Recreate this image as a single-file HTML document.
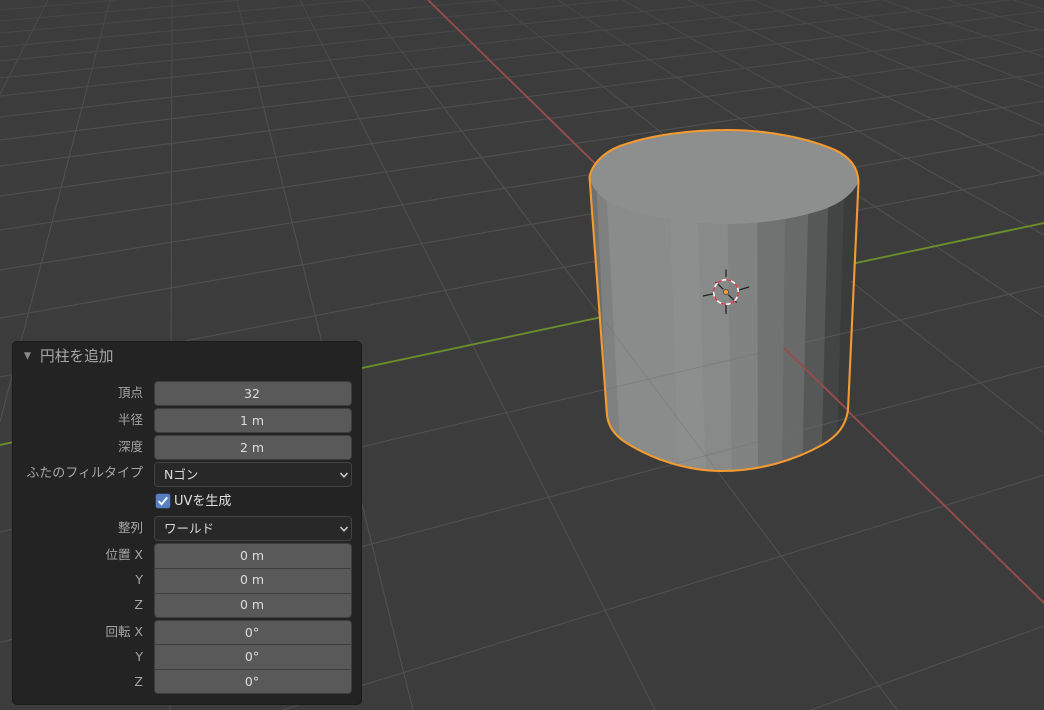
<!DOCTYPE html>
<html lang="ja">
<head>
<meta charset="utf-8">
<title>円柱を追加</title>
<style>
html,body{margin:0;padding:0;width:1044px;height:710px;overflow:hidden;background:#3c3c3c}
body{position:relative;font-family:"DejaVu Sans","Noto Sans CJK JP",sans-serif;font-size:12.5px;filter:blur(0.3px)}
svg.scene{position:absolute;left:0;top:0;display:block}
.panel{position:absolute;left:12px;top:341px;width:348px;height:362px;background:#232323;border:1px solid #1b1b1b;border-radius:5px}
.t,.l,.f{position:absolute;white-space:nowrap}
.t{left:40px;top:347px;font-size:14.7px;line-height:20px;color:#a6a6a6}
.l{left:12px;width:131px;text-align:right;color:#a6a6a6;line-height:24px;height:24px}
.f{left:154px;width:194px;padding-right:2px;background:#595959;border:1px solid #3e3e3e;color:#dcdcdc;text-align:center;line-height:23px;height:23px;border-radius:4px}
.top{border-radius:4px 4px 0 0;border-bottom:0;height:24px}
.mid{border-radius:0;border-bottom:0;height:24px;line-height:21.5px}
.bot{border-radius:0 0 4px 4px;line-height:21.5px}
.d{background:#282828;text-align:left;text-indent:9px;border-color:#434343;color:#d8d8d8}
.ck{position:absolute;left:155px;top:493px;width:14px;height:14px;background:#5680c2;border:1px solid #2f3850;border-radius:3px}
.uv{position:absolute;left:174px;top:489.5px;font-size:13px;line-height:23px;color:#e0e0e0}
svg.i{position:absolute}
</style>
</head>
<body>
<svg class="scene" width="1044" height="710" viewBox="0 0 1044 710" xmlns="http://www.w3.org/2000/svg">
<defs>
<g id="grid" fill="none" stroke-width="1.1">
<line x1="0" y1="10" x2="118.6" y2="0"/>
<line x1="0" y1="21" x2="240.9" y2="0"/>
<line x1="0" y1="33" x2="362.6" y2="0"/>
<line x1="0" y1="47" x2="495.6" y2="0"/>
<line x1="0" y1="61" x2="618.3" y2="0"/>
<line x1="0" y1="78" x2="754" y2="0"/>
<line x1="0" y1="96" x2="879" y2="0"/>
<line x1="0" y1="117" x2="1009.5" y2="0"/>
<line x1="0" y1="140" x2="1044" y2="11"/>
<line x1="0" y1="166" x2="1044" y2="29"/>
<line x1="0" y1="196" x2="1044" y2="49"/>
<line x1="0" y1="230" x2="1044" y2="73"/>
<line x1="0" y1="270" x2="1044" y2="101"/>
<line x1="0" y1="318" x2="1044" y2="134"/>
<line x1="0" y1="377" x2="1044" y2="174"/>
<line x1="0" y1="532" x2="1044" y2="286"/>
<line x1="0" y1="642.5" x2="1044" y2="366"/>
<line x1="282" y1="710" x2="1044" y2="475"/>
<line x1="811" y1="710" x2="1044" y2="626"/>
<line x1="48" y1="0" x2="0" y2="94.4"/>
<line x1="110" y1="0" x2="0" y2="422"/>
<line x1="172" y1="0" x2="170" y2="710"/>
<line x1="237" y1="0" x2="413" y2="710"/>
<line x1="300" y1="0" x2="655" y2="710"/>
<line x1="363" y1="0" x2="897" y2="710"/>
<line x1="493" y1="0" x2="1044" y2="433"/>
<line x1="558" y1="0" x2="1044" y2="317"/>
<line x1="623" y1="0" x2="1044" y2="235"/>
<line x1="688" y1="0" x2="1044" y2="173.5"/>
<line x1="753" y1="0" x2="1044" y2="125.8"/>
<line x1="818" y1="0" x2="1044" y2="87.9"/>
<line x1="883" y1="0" x2="1044" y2="56.8"/>
<line x1="948" y1="0" x2="1044" y2="31"/>
<line x1="1013" y1="0" x2="1044" y2="9.2"/>
</g>
<linearGradient id="fade" x1="0" y1="0" x2="0" y2="1">
<stop offset="0" stop-color="#3c3c3c" stop-opacity="0.5"/>
<stop offset="1" stop-color="#3c3c3c" stop-opacity="0"/>
</linearGradient>
<clipPath id="body"><path d="M589.5,177 L607,415 C608,425 613,434 625,442 C650,458 685,471 722,471 C760,471 795,460 822,445 C838,436 846,425 848,410 L858.5,182 C858,168 850,157 835,150 C810,139 770,130 727,130 C690,130 650,135 620,146 C602,153 592,165 589.5,177 Z"/></clipPath>
<clipPath id="front"><path d="M600,318 C640,350 730,362 784,348 C820,338 850,300 855,265 L848,410 C846,425 838,436 822,445 C795,460 760,471 722,471 C685,471 650,458 625,442 C613,434 608,425 607,415 Z"/></clipPath>
</defs>
<rect width="1044" height="710" fill="#3c3c3c"/>
<use href="#grid" stroke="#505050"/>
<rect width="1044" height="130" fill="url(#fade)"/>
<line x1="0" y1="445" x2="1044" y2="223" stroke="#6a8f2c" stroke-width="1.9"/>
<line x1="428" y1="0" x2="1044" y2="603" stroke="#964c4a" stroke-width="1.9"/>
<g clip-path="url(#body)">
<polygon points="580,130 870,130 870,480 580,480" fill="#6f7171"/>
<polygon points="594,130 870,130 870,480 610,480" fill="#7f8181"/>
<polygon points="603,130 870,130 870,480 622,480" fill="#8a8c8c"/>
<polygon points="667,130 870,130 870,480 679,480" fill="#8d8f8e"/>
<polygon points="695,130 870,130 870,480 706,480" fill="#888a89"/>
<polygon points="726,130 870,130 870,480 732,480" fill="#818382"/>
<polygon points="757,130 870,130 870,480 758,480" fill="#717372"/>
<polygon points="786,130 870,130 870,480 782,480" fill="#686969"/>
<polygon points="810,130 870,130 870,480 802,480" fill="#565757"/>
<polygon points="830,130 870,130 870,480 821,480" fill="#434444"/>
<polygon points="846,130 870,130 870,480 836,480" fill="#3a3b3b"/>
</g>
<path d="M589.5,177 C592,165 602,153 620,146 C650,135 690,130 727,130 C770,130 810,139 835,150 C850,157 858,168 858.5,182 C852,195 840,203 825,209 C795,219 760,224 725,224 C690,224 650,217 620,207 C603,201 592,190 589.5,177 Z" fill="#8d8e8e"/>
<g clip-path="url(#front)">
<use href="#grid" stroke="#6f7070" stroke-opacity="0.42"/>
<line x1="784" y1="348" x2="860" y2="422" stroke="#964c4a" stroke-width="1.9"/>
</g>
<path d="M589.5,177 C592,165 602,153 620,146 C650,135 690,130 727,130 C770,130 810,139 835,150 C850,157 858,168 858.5,182 L848,410 C846,425 838,436 822,445 C795,460 760,471 722,471 C685,471 650,458 625,442 C613,434 608,425 607,415 Z" fill="none" stroke="#f39a30" stroke-width="2.1" stroke-linejoin="round"/>
<g fill="none">
<g stroke="#1e1e1e" stroke-width="1.2">
<line x1="726" y1="269.5" x2="726" y2="277"/>
<line x1="726" y1="305" x2="726" y2="314"/>
<line x1="703" y1="296" x2="714" y2="293.7"/>
<line x1="738" y1="290.3" x2="749" y2="287"/>
<line x1="715.7" y1="282" x2="723.3" y2="289.3"/>
<line x1="728.3" y1="294.7" x2="736.7" y2="302.7"/>
</g>
<circle cx="726" cy="292" r="12.3" stroke="#ffffff" stroke-width="1.5"/>
<circle cx="726" cy="292" r="12.3" stroke="#d8303c" stroke-width="1.5" stroke-dasharray="4.8 4.86"/>
</g>
<circle cx="726" cy="292" r="2.6" fill="#f09a30" stroke="#2a2a2a" stroke-width="0.6"/>
</svg>

<div class="panel"></div>
<svg class="i" style="left:23px;top:351px" width="9" height="10" viewBox="0 0 9 10"><polygon points="1,1.2 8,1.2 4.5,8.8" fill="#8a8a8a"/></svg>
<div class="t">円柱を追加</div>

<div class="l" style="top:381px">頂点</div>
<div class="f" style="top:381px">32</div>
<div class="l" style="top:408px">半径</div>
<div class="f" style="top:408px">1 m</div>
<div class="l" style="top:435px">深度</div>
<div class="f" style="top:435px">2 m</div>

<div class="l" style="top:462px;font-size:13px;left:1px;width:142px">ふたのフィルタイプ</div>
<div class="f d" style="top:462px">Nゴン</div>
<svg class="i" style="left:339px;top:471px" width="10" height="8" viewBox="0 0 10 8"><path d="M1.5,2 L5,5.8 L8.5,2" fill="none" stroke="#d8d8d8" stroke-width="1.4"/></svg>

<div class="ck"></div>
<svg class="i" style="left:155px;top:493px" width="16" height="16" viewBox="0 0 17 17"><path d="M3.8,8.6 L7,12 L13,4.6" fill="none" stroke="#ffffff" stroke-width="2"/></svg>
<div class="uv">UVを生成</div>

<div class="l" style="top:516px">整列</div>
<div class="f d" style="top:516px">ワールド</div>
<svg class="i" style="left:339px;top:525px" width="10" height="8" viewBox="0 0 10 8"><path d="M1.5,2 L5,5.8 L8.5,2" fill="none" stroke="#d8d8d8" stroke-width="1.4"/></svg>

<div class="l" style="top:543px">位置 X</div>
<div class="f top" style="top:543px">0 m</div>
<div class="l" style="top:568px">Y</div>
<div class="f mid" style="top:568px;border-top:1px solid #3e3e3e">0 m</div>
<div class="l" style="top:593px">Z</div>
<div class="f bot" style="top:593px;border-top:1px solid #3e3e3e">0 m</div>

<div class="l" style="top:620px">回転 X</div>
<div class="f top" style="top:620px">0°</div>
<div class="l" style="top:645px">Y</div>
<div class="f mid" style="top:644px;border-top:1px solid #3e3e3e;line-height:23px">0°</div>
<div class="l" style="top:670px">Z</div>
<div class="f bot" style="top:669px;border-top:1px solid #3e3e3e;line-height:23px">0°</div>
</body>
</html>
